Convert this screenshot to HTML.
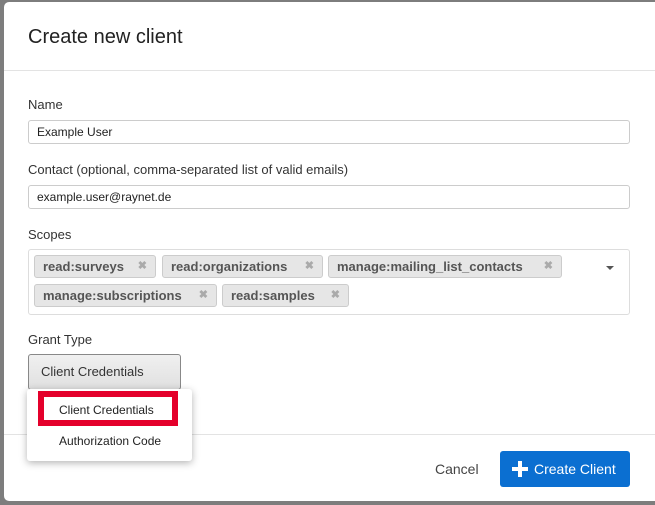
<!DOCTYPE html>
<html><head><style>
body{margin:0;width:655px;height:505px;background:#7d7d7d;position:relative;overflow:hidden;font-family:"Liberation Sans",sans-serif;color:#222}
.m{position:absolute;left:4px;top:2px;width:660px;height:499px;background:#fff;border-radius:5px}
.a{position:absolute}
.inp{position:absolute;left:28px;height:24px;border:1px solid #ccc;border-radius:3px;font-size:12px;line-height:22px;padding-left:8px;box-sizing:border-box;width:602px}
.lbl{position:absolute;left:28px;font-size:13px;color:#333}
.tag{position:absolute;height:23px;background:#e6e6e6;border:1px solid #ccc;border-radius:3px;box-sizing:border-box;font-size:13px;font-weight:bold;color:#555;line-height:21px;padding-left:8px;white-space:nowrap;overflow:hidden}
.tag b{color:#aaa;font-size:11px;position:absolute;right:8px;top:0}
</style></head><body>
<div class="m"></div>
<div class="a" style="left:28px;top:26px;font-size:20px;color:#222">Create new client</div>
<div class="a" style="left:4px;top:70px;width:651px;height:1px;background:#e3e3e3"></div>
<div class="lbl" style="top:97px">Name</div>
<div class="inp" style="top:120px">Example User</div>
<div class="lbl" style="top:162px">Contact (optional, comma-separated list of valid emails)</div>
<div class="inp" style="top:185px">example.user@raynet.de</div>
<div class="lbl" style="top:227px">Scopes</div>
<div class="a" style="left:28px;top:249px;width:602px;height:66px;border:1px solid #ddd;border-radius:3px;box-sizing:border-box"></div>
<div class="tag" style="left:34px;top:255px;width:122px">read:surveys<b>✖</b></div>
<div class="tag" style="left:162px;top:255px;width:161px">read:organizations<b>✖</b></div>
<div class="tag" style="left:328px;top:255px;width:234px">manage:mailing_list_contacts<b>✖</b></div>
<div class="tag" style="left:34px;top:284px;width:183px">manage:subscriptions<b>✖</b></div>
<div class="tag" style="left:222px;top:284px;width:127px">read:samples<b>✖</b></div>
<div class="a" style="left:606px;top:266px;width:0;height:0;border-left:4px solid transparent;border-right:4px solid transparent;border-top:4px solid #555"></div>
<div class="lbl" style="top:332px">Grant Type</div>
<div class="a" style="left:28px;top:354px;width:153px;height:36px;border:1px solid #888;border-radius:3px;box-sizing:border-box;background:linear-gradient(#f0f0f0,#e0e0e0);font-size:13px;line-height:34px;padding-left:12px;color:#333">Client Credentials</div>
<div class="a" style="left:4px;top:434px;width:651px;height:1px;background:#e3e3e3"></div>
<div class="a" style="left:27px;top:389px;width:165px;height:72px;background:#fff;border-radius:3px;box-shadow:0 2px 8px rgba(0,0,0,.3)"></div>
<div class="a" style="left:38px;top:391px;width:140px;height:35px;box-sizing:border-box;border:6px solid #e4002b;background:#fff"></div>
<div class="a" style="left:59px;top:403px;font-size:12px;color:#222">Client Credentials</div>
<div class="a" style="left:59px;top:434px;font-size:12px;color:#222">Authorization Code</div>
<div class="a" style="left:435px;top:461px;font-size:14px;color:#444">Cancel</div>
<div class="a" style="left:500px;top:451px;width:130px;height:36px;background:#0b6fd1;border-radius:3px;color:#fff;font-size:14px;line-height:36px;padding-left:34px;box-sizing:border-box">Create Client</div>
<div class="a" style="left:512px;top:467px;width:16px;height:4px;background:#fff"></div>
<div class="a" style="left:518px;top:461px;width:4px;height:16px;background:#fff"></div>
</body></html>
